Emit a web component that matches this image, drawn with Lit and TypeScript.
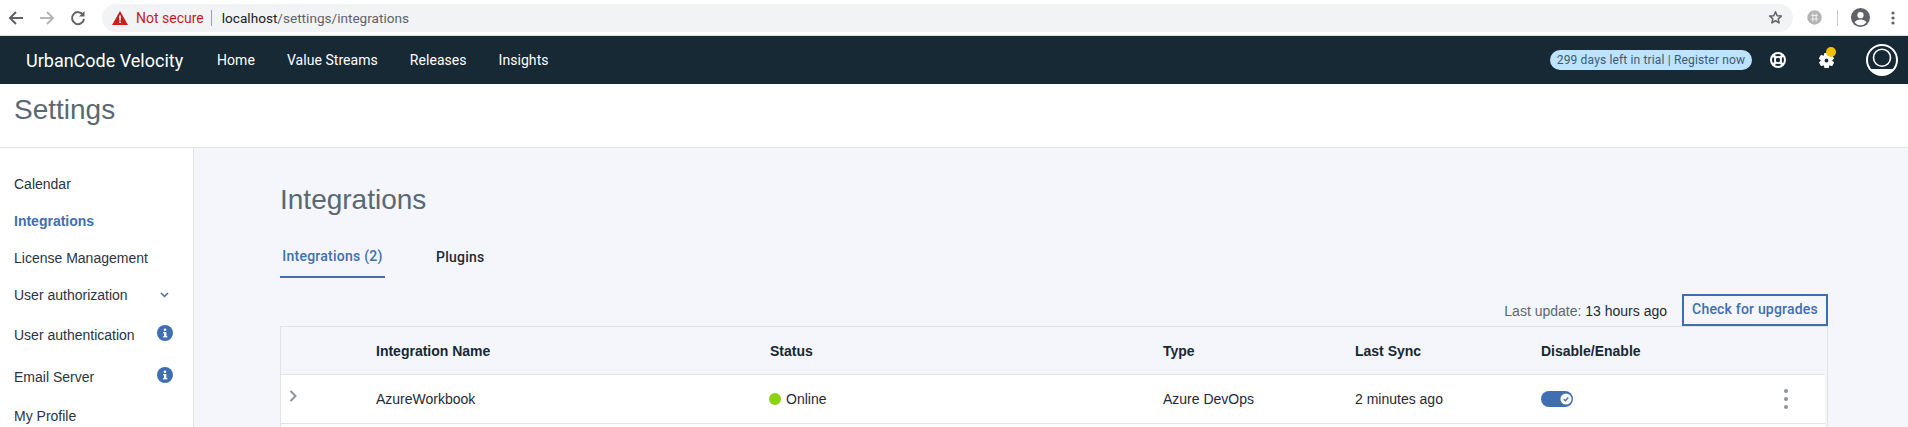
import { LitElement, css, html, svg } from "lit";
import { customElement, state } from "lit/decorators.js";

const SIDE_ITEMS = [
  { label: "Calendar", h: 37 },
  { label: "Integrations", h: 37, active: true },
  { label: "License Management", h: 37 },
  { label: "User authorization", h: 37, icon: "chevron" },
  { label: "User authentication", h: 43, icon: "info" },
  { label: "Email Server", h: 41, icon: "info" },
  { label: "My Profile", h: 37 },
];

const infoIcon = svg`<svg width="16" height="16" viewBox="0 0 16 16"><circle cx="8" cy="8" r="8" fill="#3f6fb0"/><rect x="7" y="7" width="2.4" height="5" fill="#fff"/><rect x="6" y="11.2" width="4.4" height="1.2" fill="#fff"/><rect x="6" y="7" width="2" height="1.2" fill="#fff"/><circle cx="8" cy="4.8" r="1.3" fill="#fff"/></svg>`;

@customElement("app-root")
export class AppRoot extends LitElement {
  @state() tab = 0;

  render() {
    return html`
      <div class="browser">
        <svg class="nav-arrow" width="18" height="18" viewBox="0 0 18 18"><path d="M16 9H3.500M9 3 3 9l6 6" fill="none" stroke="#5f6368" stroke-width="2"/></svg>
        <svg class="nav-arrow" width="18" height="18" viewBox="0 0 18 18"><path d="M2 9h12.500M9 3l6 6-6 6" fill="none" stroke="#b4b6b9" stroke-width="2"/></svg>
        <svg class="nav-arrow" width="18" height="18" viewBox="0 0 18 18"><path d="M14.200 6A6 6 0 1 0 15 10" fill="none" stroke="#5f6368" stroke-width="2"/><path d="M15.500 2v5.500H10z" fill="#5f6368"/></svg>
        <div class="omnibox">
          <svg width="16" height="14" viewBox="0 0 16 14"><path d="M8 0 16 14H0z" fill="#c5221f"/><rect x="7.200" y="4.500" width="1.600" height="5" fill="#fff"/><rect x="7.200" y="10.400" width="1.600" height="1.600" fill="#fff"/></svg>
          <span class="insecure">Not secure</span>
          <span class="sep"></span>
          <span class="url"><b>localhost</b>/settings/integrations</span>
          <svg class="star" width="15" height="15" viewBox="0 0 24 24"><path d="m12 3 2.700 6.100 6.600.6-5 4.400 1.500 6.500-5.800-3.400-5.800 3.400 1.500-6.500-5-4.400 6.600-.6z" fill="none" stroke="#5f6368" stroke-width="2.400" stroke-linejoin="round"/></svg>
        </div>
        <div class="ext"><svg width="15" height="15" viewBox="0 0 15 15"><circle cx="7.500" cy="7.500" r="7.200" fill="#b4b4b4"/><path d="M4.200 5.500h6.600M4.200 9h6.600M5.800 3.500v8M9.200 3.500v8" stroke="#eee" stroke-width="1.100" fill="none"/></svg></div>
        <span class="bar-sep"></span>
        <svg class="profile" width="19" height="19" viewBox="0 0 20 20"><circle cx="10" cy="10" r="10" fill="#5f6368"/><circle cx="10" cy="7.500" r="3.300" fill="#fff"/><path d="M3.800 15.200C5 12.800 7.500 12 10 12s5 .8 6.200 3.200A8 8 0 0 1 3.800 15.200z" fill="#fff"/></svg>
        <svg class="menu" width="4" height="14" viewBox="0 0 4 14"><circle cx="2" cy="2" r="1.600" fill="#5f6368"/><circle cx="2" cy="7" r="1.600" fill="#5f6368"/><circle cx="2" cy="12" r="1.600" fill="#5f6368"/></svg>
      </div>

      <header class="topnav">
        <span class="brand">UrbanCode Velocity</span>
        <nav>
          <a>Home</a><a>Value Streams</a><a>Releases</a><a>Insights</a>
        </nav>
        <span class="trial">299 days left in trial | Register now</span>
        <svg class="help" width="16" height="16" viewBox="0 0 16 16"><circle cx="8" cy="8" r="7" fill="none" stroke="#fff" stroke-width="2"/><circle cx="8" cy="8" r="3.100" fill="none" stroke="#fff" stroke-width="1.800"/><path d="M3 3l3 3M13 3l-3 3M3 13l3-3M13 13l-3-3" stroke="#fff" stroke-width="2.600"/></svg>
        <span class="gear">
          <svg width="17" height="17" viewBox="0 0 24 24"><path fill="#fff" stroke="#fff" stroke-width="1.500" d="M19.400 13c.1-.3.100-.7.100-1s0-.7-.1-1l2.100-1.600c.2-.2.200-.4.100-.6l-2-3.500c-.1-.2-.4-.3-.6-.2l-2.500 1c-.5-.4-1.100-.7-1.700-1l-.4-2.600c0-.3-.2-.5-.5-.5h-4c-.3 0-.5.200-.5.500l-.4 2.600c-.6.300-1.200.6-1.700 1l-2.500-1c-.2-.1-.5 0-.6.200l-2 3.500c-.1.200-.1.400.1.600L4.600 11c-.1.300-.1.700-.1 1s0 .7.100 1l-2.100 1.600c-.2.200-.2.400-.1.600l2 3.500c.1.200.4.300.6.200l2.500-1c.5.400 1.100.7 1.700 1l.4 2.600c0 .3.200.5.500.5h4c.3 0 .5-.2.500-.5l.4-2.600c.6-.3 1.200-.6 1.700-1l2.500 1c.2.100.5 0 .6-.2l2-3.500c.1-.2.100-.4-.1-.6zM12 15.500a3.500 3.500 0 1 1 0-7 3.500 3.500 0 0 1 0 7z"/></svg>
          <i class="dot"></i>
        </span>
        <svg class="avatar" width="32" height="32" viewBox="0 0 32 32"><defs><clipPath id="av"><circle cx="16" cy="16" r="15"/></clipPath></defs><circle cx="16" cy="16" r="15" fill="none" stroke="#fff" stroke-width="2"/><circle cx="16" cy="13.700" r="8.500" fill="none" stroke="#fff" stroke-width="1.600"/><rect x="0" y="25" width="32" height="8" fill="#fff" clip-path="url(#av)"/></svg>
      </header>

      <div class="page-title"><h1>Settings</h1></div>

      <div class="body">
        <aside>
          ${SIDE_ITEMS.map(item => html`
            <div class="side-item ${item.active ? "active" : ""}" style="height:${item.h}px">
              <span>${item.label}</span>
              ${item.icon === "info" ? html`<span class="info">${infoIcon}</span>` : ""}
              ${item.icon === "chevron" ? html`<svg class="chev" width="9" height="6" viewBox="0 0 9 6"><path d="m1 1 3.500 3.500L8 1" fill="none" stroke="#3f6fb0" stroke-width="1.500"/></svg>` : ""}
            </div>
          `)}
        </aside>
        <main>
          <h2>Integrations</h2>
          <div class="tabs">
            <button class="tab active">Integrations (2)</button>
            <button class="tab">Plugins</button>
          </div>
          <div class="toolbar">
            <span class="updated"><span>Last update:</span> 13 hours ago</span>
            <button class="upgrade">Check for upgrades</button>
          </div>
          <div class="table">
            <div class="row head">
              <div></div><div>Integration Name</div><div>Status</div><div>Type</div><div>Last Sync</div><div>Disable/Enable</div><div></div>
            </div>
            <div class="row">
              <div><svg class="expand" width="8" height="12" viewBox="0 0 8 12"><path d="m1.500 1 5 5-5 5" fill="none" stroke="#8d949c" stroke-width="2"/></svg></div>
              <div>AzureWorkbook</div>
              <div class="status"><i></i>Online</div>
              <div>Azure DevOps</div>
              <div>2 minutes ago</div>
              <div><span class="toggle"><svg width="12" height="12" viewBox="0 0 14 14"><circle cx="7" cy="7" r="6.500" fill="#fff"/><path d="m4.300 7.200 2 1.800 3.400-3.800" fill="none" stroke="#3f6fb0" stroke-width="1.600"/></svg></span></div>
              <div class="more"><i></i><i></i><i></i></div>
            </div>
            <div class="row"></div>
          </div>
        </main>
      </div>
    `;
  }

  static styles = css`
    :host {
      display: block;
      width: 1908px;
      height: 427px;
      overflow: hidden;
      background: #fff;
      font-family: "Liberation Sans", Arial, sans-serif;
      color: #1f2a36;
    }

    /* browser chrome */
    .browser {
      display: flex;
      align-items: center;
      padding-left: 7px;
      box-sizing: border-box;
      border-bottom: 1px solid #dcdee0;
      height: 36px;
    }
    .nav-arrow { margin-right: 13px; flex: none; }
    .omnibox {
      width: 1691px;
      height: 28px;
      margin-left: 2px;
      border-radius: 14px;
      background: #f1f3f4;
      display: flex;
      align-items: center;
      padding-left: 10px;
      box-sizing: border-box;
      font: 13.6px "Roboto", sans-serif;
      flex: none;
    }
    .insecure { color: #c5221f; margin-left: 8px; font-size: 14px; }
    .sep { width: 1px; height: 16px; background: #9aa0a6; margin: 0 10px 0 7px; }
    .url { color: #5f6368; }
    .url b { font-weight: 400; color: #202124; }
    .star { margin-left: auto; margin-right: 10px; }
    .ext { margin-left: 14px; width: 15px; height: 15px; display: flex; flex: none; }
    .bar-sep { width: 1px; height: 16px; background: #c8cacc; margin: 0 13px 0 15px; flex: none; }
    .profile { flex: none; }
    .menu { margin-left: 21px; flex: none; }

    /* app header */
    .topnav {
      height: 48px;
      background: #162935;
      color: #fff;
      display: flex;
      align-items: center;
      padding-left: 26px;
      font-family: "Roboto", sans-serif;
    }
    .brand { font-size: 18px; width: 191px; flex: none; }
    nav { display: flex; gap: 32px; font-size: 14px; letter-spacing: 0.05px; }
    .trial {
      margin-left: auto;
      width: 202px;
      height: 20px;
      line-height: 20px;
      text-align: center;
      border-radius: 10px;
      background: #bde3ff;
      color: #3e5a72;
      font-size: 12px;
      letter-spacing: 0.15px;
    }
    .help { margin-left: 18px; flex: none; }
    .gear { margin-left: 32px; width: 17px; height: 17px; position: relative; display: block; }
    .gear svg { display: block; }
    .dot { position: absolute; right: -1px; top: -5px; width: 10px; height: 10px; border-radius: 50%; background: #efc100; }
    .avatar { margin-left: 31px; margin-right: 10px; flex: none; }

    .page-title {
      height: 64px;
      box-sizing: border-box;
      border-bottom: 1px solid #dfe3e6;
      padding-left: 14px;
    }
    h1 {
      margin: 0;
      padding-top: 9px;
      font-weight: 400;
      font-size: 28px;
      line-height: 34px;
      color: #5a6872;
    }

    .body { display: flex; height: 279px; background: #f4f6fb; }
    aside {
      width: 194px;
      flex: none;
      box-sizing: border-box;
      background: #fff;
      border-right: 1px solid #dfe3e6;
      padding: 17px 20px 0 14px;
      font-size: 14px;
    }
    .side-item { display: flex; align-items: center; justify-content: space-between; color: #2a3540; }
    .side-item.active { color: #3f6fb0; font-weight: 700; }
    .info { height: 16px; display: block; margin-top: -4px; }
    .info svg { display: block; }
    .chev { margin-right: 4px; }

    main { width: 1548px; margin-left: 86px; flex: none; }
    h2 {
      margin: 0;
      padding-top: 35px;
      font-weight: 400;
      font-size: 28px;
      line-height: 34px;
      color: #5a6872;
    }
    .tabs { display: flex; margin-top: 20px; }
    .tab {
      border: 0;
      background: none;
      height: 41px;
      box-sizing: border-box;
      font: 500 14px "Roboto", sans-serif;
      letter-spacing: 0.25px;
      color: #1f2a36;
      padding: 0 0 2px;
    }
    .tab.active {
      width: 105px;
      color: #3f6fb0;
      border-bottom: 2px solid #3f6fb0;
    }
    .tab:not(.active) { margin-left: 51px; }
    .toolbar { display: flex; justify-content: flex-end; align-items: center; margin-top: 16px; height: 32px; }
    .updated { font-size: 14px; margin-right: 15px; padding-top: 2px; }
    .updated span { color: #5a6872; }
    .upgrade {
      width: 146px;
      height: 32px;
      border: 2px solid #3f6fb0;
      background: none;
      color: #3f6fb0;
      font: 500 14px "Roboto", sans-serif;
      letter-spacing: 0.2px;
      padding: 0 0 3px;
    }
    .table {
      border: 1px solid #dfe3e6;
      border-bottom: 0;
      padding-right: 2px;
      font-size: 14px;
    }
    .row {
      display: grid;
      grid-template-columns: 95px 394px 393px 192px 186px 244px 1fr;
      height: 48px;
      align-items: center;
      background: #fff;
      border-bottom: 1px solid #dfe3e6;
    }
    .row.head { height: 47px; background: #f4f6fb; font-weight: 700; color: #152935; }
    .expand { margin-left: 8px; display: block; margin-top: -6px; }
    .status { display: flex; align-items: center; gap: 5px; margin-left: -1px; }
    .status i { width: 12px; height: 12px; border-radius: 50%; background: #8cd211; }
    .toggle {
      width: 32px;
      height: 16px;
      border-radius: 8px;
      background: #3f6fb0;
      display: flex;
      align-items: center;
      justify-content: flex-end;
      padding-right: 1px;
      box-sizing: border-box;
    }
    .more { display: flex; flex-direction: column; gap: 4px; margin-left: -1px; }
    .more i { width: 4px; height: 4px; border-radius: 50%; background: #8d949c; display: block; }
  `;
}
